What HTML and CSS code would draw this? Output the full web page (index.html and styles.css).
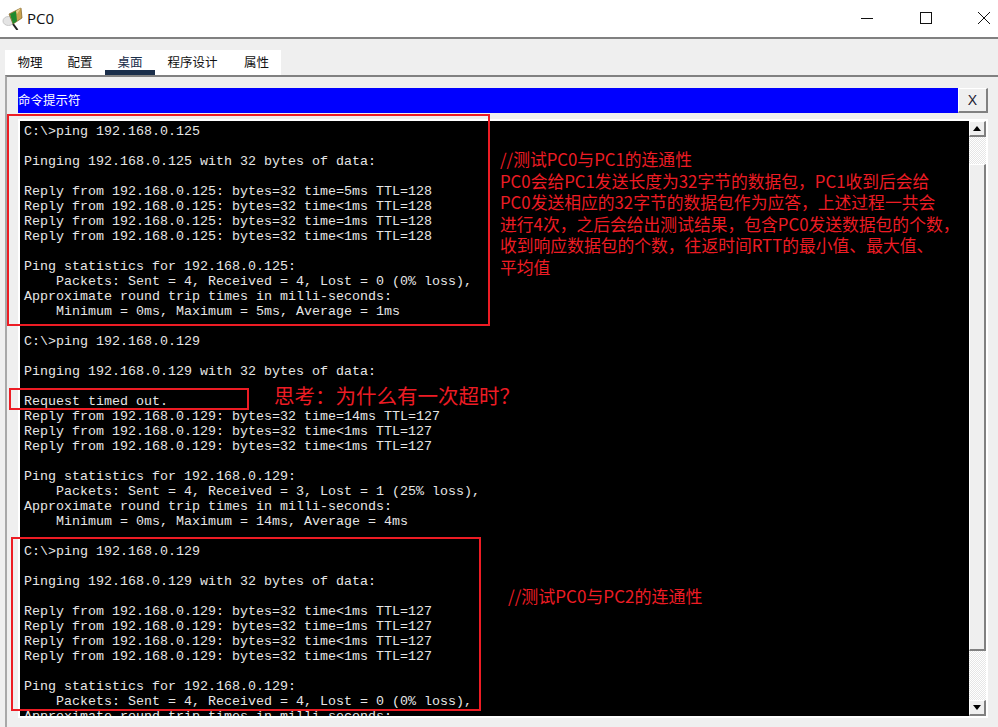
FILE: index.html
```html
<!DOCTYPE html>
<html lang="zh">
<head>
<meta charset="utf-8">
<title>PC0</title>
<link rel="stylesheet" href="styles.css">
</head>
<body>
<div class="window">
  <header class="titlebar">
    <div class="title">
      <svg class="app-icon" width="22" height="24" viewBox="0 0 22 24">
        <ellipse cx="6.5" cy="15" rx="5.5" ry="4.5" fill="#e4e4e4" stroke="#c8c8c8"/>
        <path d="M11 18l4.5 6" stroke="#222" stroke-width="2"/>
        <path d="M7 8l12-6 1 10-9 6z" fill="#c9a24e" stroke="#7a5c20" stroke-width=".7"/>
        <path d="M8 8l6-3 1 10-4 3z" fill="#1f8a2e"/>
        <path d="M14 5l5-3-4 6z" fill="#e8cf8e"/>
      </svg>
      <span class="title-text">PC0</span>
    </div>
    <div class="win-controls">
      <svg width="14" height="14" viewBox="0 0 14 14"><path d="M1 7.5h12" stroke="#111"/></svg>
      <svg width="14" height="14" viewBox="0 0 14 14"><rect x="1.5" y="1.5" width="11" height="11" fill="none" stroke="#111"/></svg>
      <svg width="14" height="14" viewBox="0 0 14 14"><path d="M1 1l12 12M13 1L1 13" stroke="#111"/></svg>
    </div>
  </header>
  <nav class="tabs">
    <span class="tab">物理</span>
    <span class="tab">配置</span>
    <span class="tab tab-active">桌面</span>
    <span class="tab">程序设计</span>
    <span class="tab tab-last">属性</span>
  </nav>
  <main class="panel">
    <div class="cmd-head">
      <div class="cmd-title">命令提示符</div>
      <button class="cmd-close">X</button>
    </div>
    <div class="terminal-frame">
      <pre class="terminal">C:\&gt;ping 192.168.0.125

Pinging 192.168.0.125 with 32 bytes of data:

Reply from 192.168.0.125: bytes=32 time=5ms TTL=128
Reply from 192.168.0.125: bytes=32 time&lt;1ms TTL=128
Reply from 192.168.0.125: bytes=32 time=1ms TTL=128
Reply from 192.168.0.125: bytes=32 time&lt;1ms TTL=128

Ping statistics for 192.168.0.125:
    Packets: Sent = 4, Received = 4, Lost = 0 (0% loss),
Approximate round trip times in milli-seconds:
    Minimum = 0ms, Maximum = 5ms, Average = 1ms

C:\&gt;ping 192.168.0.129

Pinging 192.168.0.129 with 32 bytes of data:

Request timed out.
Reply from 192.168.0.129: bytes=32 time=14ms TTL=127
Reply from 192.168.0.129: bytes=32 time&lt;1ms TTL=127
Reply from 192.168.0.129: bytes=32 time&lt;1ms TTL=127

Ping statistics for 192.168.0.129:
    Packets: Sent = 4, Received = 3, Lost = 1 (25% loss),
Approximate round trip times in milli-seconds:
    Minimum = 0ms, Maximum = 14ms, Average = 4ms

C:\&gt;ping 192.168.0.129

Pinging 192.168.0.129 with 32 bytes of data:

Reply from 192.168.0.129: bytes=32 time&lt;1ms TTL=127
Reply from 192.168.0.129: bytes=32 time=1ms TTL=127
Reply from 192.168.0.129: bytes=32 time&lt;1ms TTL=127
Reply from 192.168.0.129: bytes=32 time&lt;1ms TTL=127

Ping statistics for 192.168.0.129:
    Packets: Sent = 4, Received = 4, Lost = 0 (0% loss),
Approximate round trip times in milli-seconds:</pre>
      <div class="scrollbar">
        <div class="sb-btn"><span class="arrow-up"></span></div>
        <div class="sb-gap sb-gap-top"></div>
        <div class="sb-thumb"></div>
        <div class="sb-gap sb-gap-bottom"></div>
        <div class="sb-btn"><span class="arrow-down"></span></div>
      </div>
    </div>
  </main>
</div>
<div class="mark mark-a"></div>
<div class="mark mark-b"></div>
<div class="mark mark-c"></div>
<div class="note note-a">//测试PC0与PC1的连通性<br>PC0会给PC1发送长度为32字节的数据包，PC1收到后会给<br>PC0发送相应的32字节的数据包作为应答，上述过程一共会<br>进行4次，之后会给出测试结果，包含PC0发送数据包的个数，<br>收到响应数据包的个数，往返时间RTT的最小值、最大值、<br>平均值</div>
<div class="note note-b">思考：为什么有一次超时？</div>
<div class="note note-c">//测试PC0与PC2的连通性</div>
</body>
</html>
```
FILE: styles.css
```css
* { box-sizing: border-box; }
html, body { margin: 0; padding: 0; }
body { width: 998px; height: 727px; overflow: hidden; position: relative; background: #efefef; }
.window { display: flex; flex-direction: column; height: 727px; }

.titlebar { height: 39px; flex: none; background: #fff; border-bottom: 2px solid #808080; display: flex; justify-content: space-between; align-items: center; }
.title { display: flex; align-items: center; padding-left: 2px; gap: 3px; }
.app-icon { display: block; margin-top: -2px; }
.title-text { font: 15px "Open Sans", sans-serif; color: #111; margin-top: -2px; }
.win-controls { display: flex; gap: 44.5px; margin-top: -1px; width: 138px; }

.tabs { flex: none; height: 36px; padding: 11px 0 0 5px; display: flex; background: #efefef; }
.tab { height: 25px; padding: 0 12.5px; background: #fff; font: 12.5px/23px "Noto Sans CJK SC", sans-serif; color: #111; }
.tab-active { border-bottom: 5px solid #1a2e4a; color: #1a2e4a; }
.tab-last { padding: 0 12px 0 14px; }

.panel { flex: 1; margin-left: 5px; background: #efefef; border-top: 2px solid #808080; border-left: 2px solid #a8a8a8; padding: 11px 10px 0 11px; }
.cmd-head { display: flex; height: 25px; }
.cmd-title { width: 940px; height: 25px; background: #0000ff; color: #fff; font: 12.5px/23px "Noto Sans CJK SC", sans-serif; }
.cmd-close { width: 30px; height: 25px; padding: 0; background: #efefef; border: 1px solid; border-color: #fff #808080 #808080 #fff; border-right-width: 2px; border-bottom-width: 2px; font: 14px "Liberation Sans", sans-serif; color: #223; }

.terminal-frame { margin-top: 6px; width: 970px; height: 599px; background: #fff; padding: 2px; display: flex; }
.terminal { margin: 0; flex: 1; height: 595px; overflow: hidden; background: #000; color: #e6e6e6; font: 13.333px/15px "Liberation Mono", monospace; padding: 3px 0 0 4px; }

.scrollbar { width: 17px; height: 595px; display: flex; flex-direction: column; }
.sb-btn { flex: none; height: 16px; background: #efefef; border: 1px solid; border-color: #fff #808080 #808080 #fff; border-right-width: 2px; border-bottom-width: 2px; display: flex; align-items: center; justify-content: center; }
.arrow-up { border: 4px solid transparent; border-top: 0; border-bottom: 5px solid #000; width: 0; height: 0; }
.arrow-down { border: 4px solid transparent; border-bottom: 0; border-top: 5px solid #000; width: 0; height: 0; }
.sb-gap { background: repeating-conic-gradient(#e6e6e6 0 25%, #fff 0 50%) 0 0 / 2px 2px; }
.sb-gap-top { flex: none; height: 27px; }
.sb-gap-bottom { flex: 1; }
.sb-thumb { flex: none; height: 487px; background: #efefef; border: 1px solid; border-color: #fff #808080 #808080 #fff; border-right-width: 2px; border-bottom-width: 2px; }

.mark { position: absolute; border: 2px solid #ed1c24; }
.mark-a { left: 7px; top: 114px; width: 483px; height: 212px; }
.mark-b { left: 9px; top: 388px; width: 240px; height: 22px; }
.mark-c { left: 11px; top: 537px; width: 470px; height: 174px; }

.note { position: absolute; color: #ed1c24; font-family: "Noto Sans CJK SC", sans-serif; white-space: nowrap; }
.note-a { left: 500px; top: 149px; font-size: 16.8px; line-height: 21.6px; }
.note-b { left: 274px; top: 381px; font-size: 20.5px; line-height: 28px; }
.note-c { left: 508px; top: 585px; font-size: 17px; line-height: 22px; }
```
